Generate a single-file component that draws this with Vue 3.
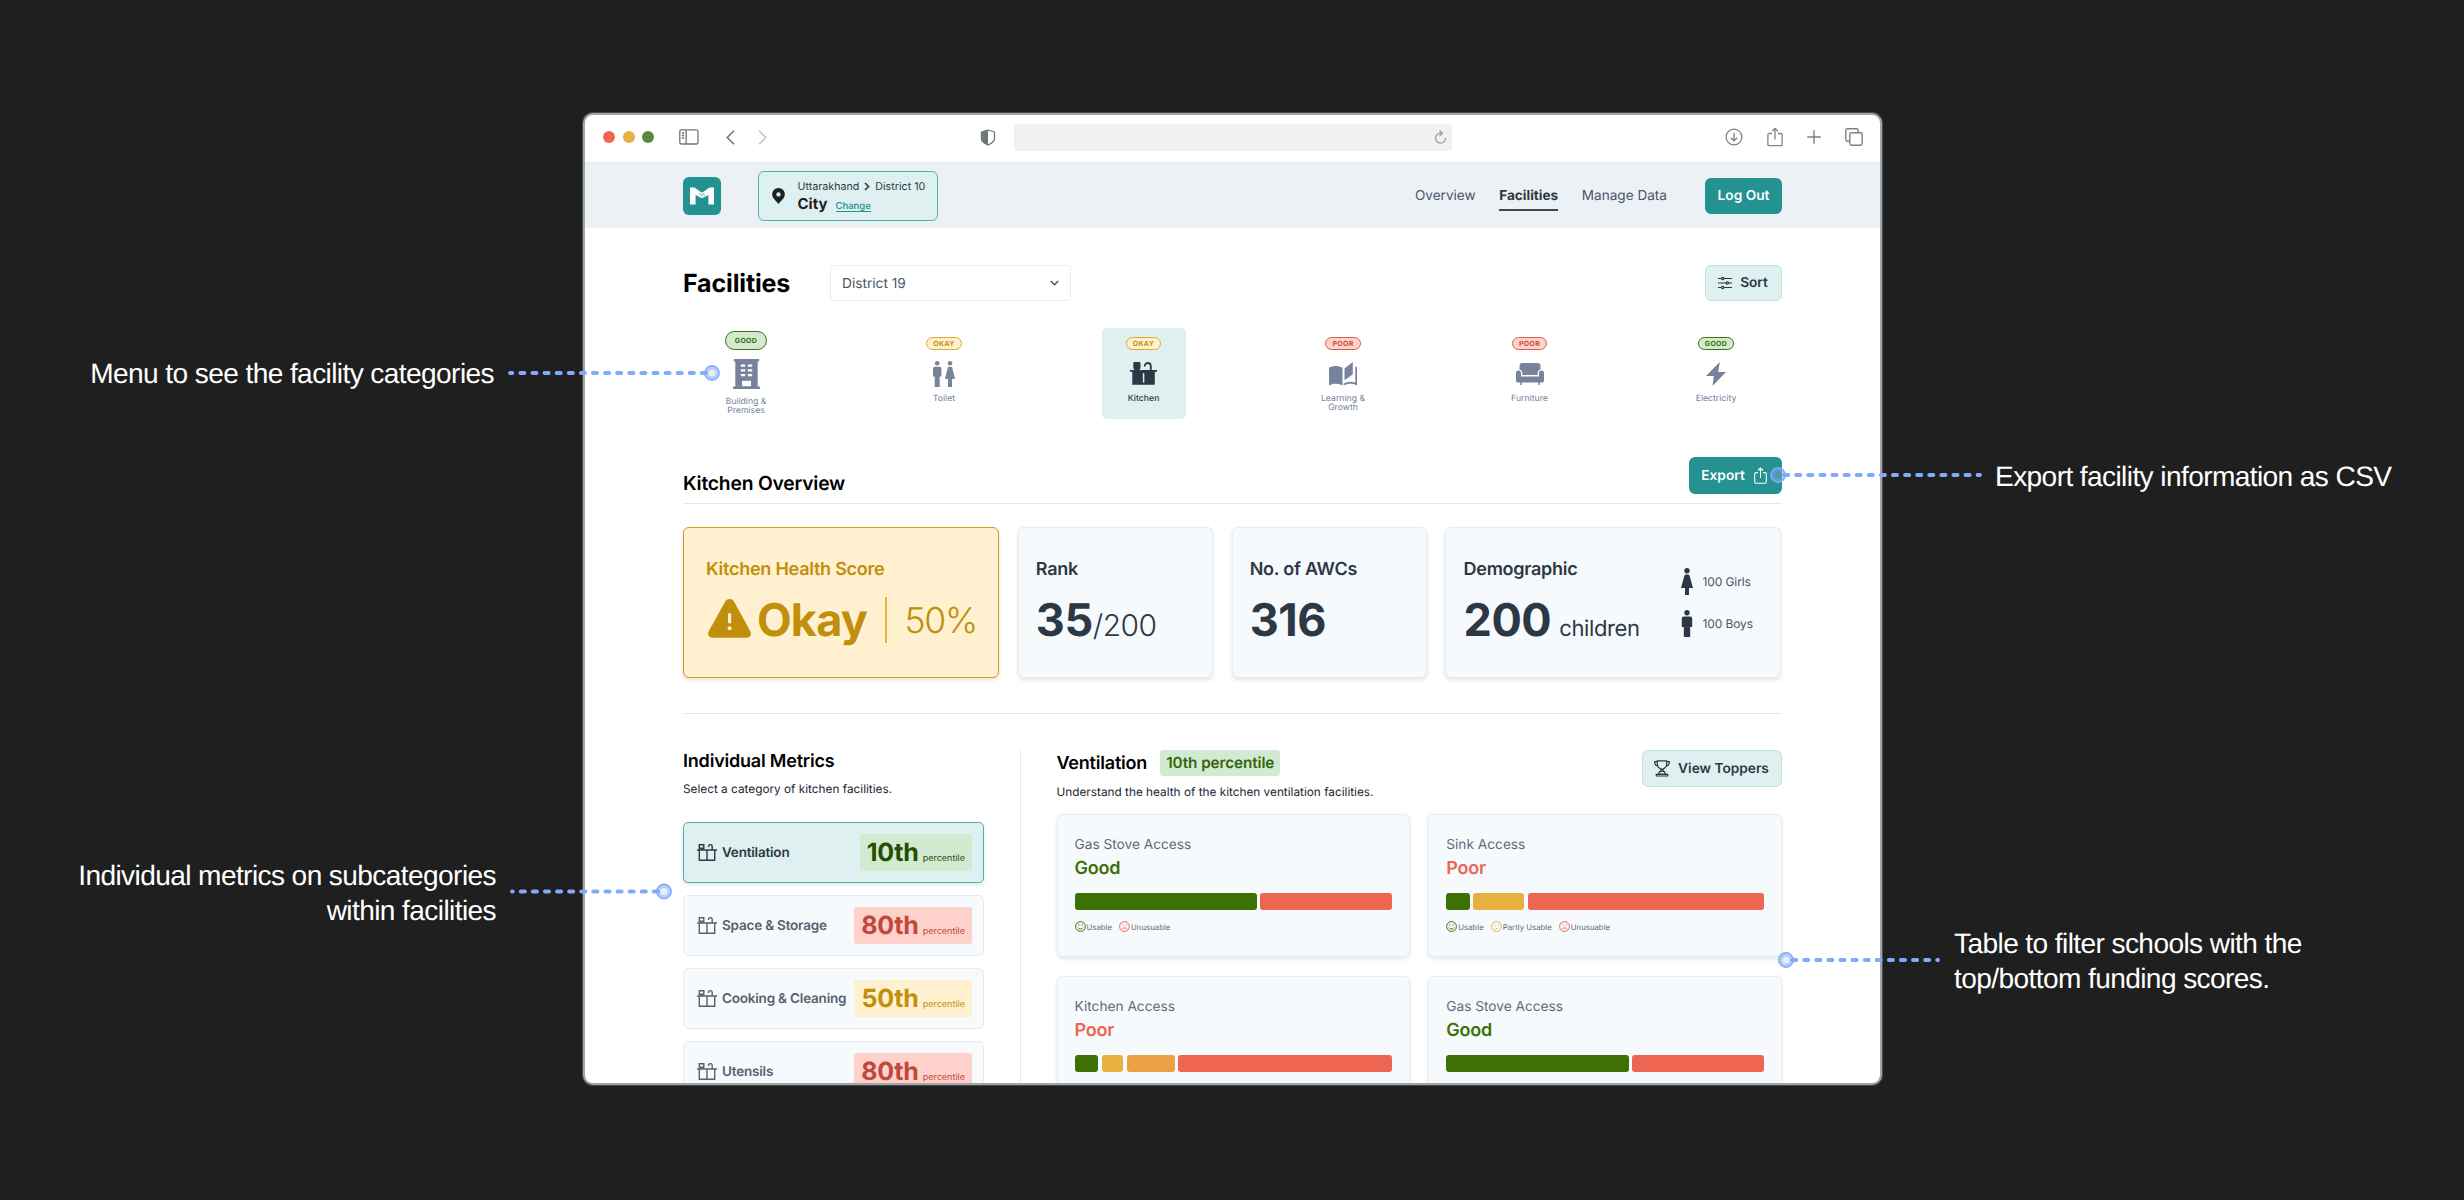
<script setup>
import { ref } from 'vue'

const activeCategory = ref('Kitchen')
const activeMetric = ref('Ventilation')

const navs = ['Overview', 'Facilities', 'Manage Data']

const categories = [
  { name: 'Building & Premises', status: 'good', icon: 'building', large: true },
  { name: 'Toilet', status: 'okay', icon: 'toilet' },
  { name: 'Kitchen', status: 'okay', icon: 'kitchen' },
  { name: 'Learning & Growth', status: 'poor', icon: 'book' },
  { name: 'Furniture', status: 'poor', icon: 'chair' },
  { name: 'Electricity', status: 'good', icon: 'bolt' },
]

const metrics = [
  { name: 'Ventilation', score: '10th', status: 'good' },
  { name: 'Space & Storage', score: '80th', status: 'poor' },
  { name: 'Cooking & Cleaning', score: '50th', status: 'okay' },
  { name: 'Utensils', score: '80th', status: 'poor' },
]

const full = [['good', 'Usable'], ['okay', 'Partly Usable'], ['poor', 'Unusuable']]
const short = [['good', 'Usable'], ['poor', 'Unusuable']]

// bars: [color, share]
const cards = [
  { name: 'Gas Stove Access', status: 'good', bars: [['good', 182.6], ['poor', 131.5]], legend: short },
  { name: 'Sink Access', status: 'poor', bars: [['good', 24], ['okay', 51], ['poor', 236.5]], legend: full },
  { name: 'Kitchen Access', status: 'poor', bars: [['good', 24], ['okay', 21.5], ['mid', 48], ['poor', 214]], legend: full },
  { name: 'Gas Stove Access', status: 'good', bars: [['good', 182.6], ['poor', 131.5]], legend: short },
]

const labels = { good: 'Good', okay: 'Okay', poor: 'Poor' }

// callouts around the window: dot + dashed line + text
const pins = [
  { x: 712, y: 373, end: 508 },
  { x: 664, y: 891.5, end: 510 },
  { x: 1778, y: 475, end: 1982 },
  { x: 1786, y: 960, end: 1940 },
]
</script>

<template>
  <div class="stage">
    <div class="window">
      <div class="toolbar">
        <div class="lights"><i class="red"></i><i class="yellow"></i><i class="green"></i></div>
        <svg class="tb-side" width="20" height="16" viewBox="0 0 20 16" fill="none" stroke="#6f7877" stroke-width="1.3">
          <rect x=".8" y=".8" width="18.2" height="14.2" rx="1.6" />
          <path d="M7.2 1v14M2.8 4h2.4M2.8 6.5h2.4M2.8 9h2.4" />
        </svg>
        <svg class="tb-back" width="9" height="15" viewBox="0 0 9 15" fill="none" stroke="#6f7877" stroke-width="1.5"><path d="M8 .8 1.2 7.5 8 14.2" /></svg>
        <svg class="tb-fwd" width="9" height="15" viewBox="0 0 9 15" fill="none" stroke="#bdc1c1" stroke-width="1.5"><path d="M1 .8 7.8 7.5 1 14.2" /></svg>
        <svg class="tb-shield" width="16" height="17" viewBox="0 0 16 17">
          <path d="M8 1 14.5 3v7c0 3-3.5 4.600-6.500 6C5 14.600 1.500 13 1.500 10V3z" fill="none" stroke="#6f7877" stroke-width="1.3" stroke-linejoin="round" />
          <path d="M8 1v15C5 14.600 1.500 13 1.500 10V3z" fill="#6f7877" />
        </svg>
        <div class="url">
          <svg width="13" height="14" viewBox="0 0 13 14" fill="none" stroke="#999d9d" stroke-width="1.3"><path d="M7.500 3.200H6.500a5 5 0 1 0 5 4.800M5.500.5l3 2.700-3 2.700" /></svg>
        </div>
        <div class="tools">
          <svg width="18" height="18" viewBox="0 0 18 18" fill="none" stroke="#7b8383" stroke-width="1.3"><circle cx="9" cy="9" r="7.900" /><path d="M9 4.800v8M5.900 9.800 9 12.900l3.100-3.100" /></svg>
          <svg width="16" height="20" viewBox="0 0 16 20" fill="none" stroke="#7b8383" stroke-width="1.300"><path d="M5 6.500H2.200A1.300 1.300 0 0 0 .9 7.800v9.600a1.300 1.300 0 0 0 1.300 1.300h11.600a1.300 1.300 0 0 0 1.300-1.300V7.800a1.300 1.300 0 0 0-1.300-1.300H11M8 12.500V1.500M5 4.300l3-3 3 3" /></svg>
          <svg width="14" height="14" viewBox="0 0 14 14" stroke="#7b8383" stroke-width="1.400"><path d="M7 .3v13.400M.3 7h13.400" /></svg>
          <svg width="18" height="18" viewBox="0 0 18 18" fill="none" stroke="#7b8383" stroke-width="1.400"><rect x="4.800" y="4.800" width="12.400" height="12.400" rx="1.600" /><path d="M4.800 13.200H2.400A1.600 1.600 0 0 1 .8 11.600V2.400A1.600 1.600 0 0 1 2.400.8h9.200a1.600 1.600 0 0 1 1.600 1.600v2.400" /></svg>
        </div>
      </div>

      <header class="header">
        <div class="logo">
          <svg width="26" height="20" viewBox="0 0 26 20">
            <path d="M1 18.500V1.500h4.500L11 5.600c1.400 1 2.600 1 4 0l5.500-4.100H25v17h-5.600V9l-4.200 2.300c-1.600.8-2.900.8-4.400 0L6.600 9v9.500z" fill="#fff" />
            <path d="M10.500 7.500 14 10.500M12.800 6.600l3.300 3" stroke="#239291" stroke-width=".8" />
          </svg>
        </div>
        <div class="location">
          <svg width="13" height="16" viewBox="0 0 13 16"><path fill-rule="evenodd" fill="#1d2024" d="M6.500 0a6.300 6.300 0 0 0-6.300 6.300C.2 10.300 4 12.600 6.500 16c2.500-3.400 6.300-5.700 6.300-9.700A6.300 6.300 0 0 0 6.500 0zm0 4.200a2.200 2.200 0 1 1 0 4.400 2.200 2.200 0 0 1 0-4.400z" /></svg>
          <div>
            <div class="crumbs">
              <span>Uttarakhand</span>
              <svg width="6" height="9" viewBox="0 0 6 9" fill="none" stroke="#2d3845" stroke-width="1.600"><path d="M1 1l3.600 3.500L1 8" /></svg>
              <span>District 10</span>
            </div>
            <div class="city"><b>City</b><a>Change</a></div>
          </div>
        </div>
        <nav>
          <a v-for="n in navs" :key="n" :class="{ active: n === 'Facilities' }">{{ n }}</a>
        </nav>
        <button class="btn solid logout">Log Out</button>
      </header>

      <main>
        <div class="title-row">
          <h1>Facilities</h1>
          <div class="select">
            <span>District 19</span>
            <svg width="9" height="6" viewBox="0 0 9 6" fill="none" stroke="#4a5568" stroke-width="1.500"><path d="M.8 1l3.700 3.700L8.200 1" /></svg>
          </div>
          <button class="btn light sort">
            <svg width="14" height="14" viewBox="0 0 14 14" fill="#def0ef" stroke="#2d3845" stroke-width="1.200">
              <path d="M0 2.500h14M0 7h14M0 11.500h14" /><circle cx="4.700" cy="2.500" r="1.200" /><circle cx="9.300" cy="7" r="1.200" /><circle cx="4.700" cy="11.500" r="1.200" />
            </svg>
            Sort
          </button>
        </div>

        <div class="categories">
          <div
            v-for="c in categories"
            :key="c.name"
            class="category"
            :class="{ active: c.name === activeCategory, large: c.large }"
            @click="activeCategory = c.name"
          >
            <span class="pill" :class="c.status">{{ labels[c.status] }}</span>
            <div class="cat-icon">
              <svg v-if="c.icon === 'building'" width="27" height="30" viewBox="0 0 27 30" fill="currentColor">
                <path fill-rule="evenodd" d="M.8 0h25.400v2.400h-1.500V27.600H27V30H0v-2.400h2.300V2.400H.8zM7.800 5.500v2.200h4.400V5.500zm7 0v2.200h4.400V5.500zm-7 4.800v2.200h4.400v-2.200zm7 0v2.200h4.400v-2.200zm-7 4.800v2.200h4.400v-2.200zm7 0v2.200h4.400v-2.200zM9 21.700v5.600h9v-5.600z" />
              </svg>
              <svg v-else-if="c.icon === 'toilet'" width="22" height="26" viewBox="0 0 22 26" fill="currentColor">
                <circle cx="4.200" cy="2.300" r="2.300" /><path d="M2 5.800h4.400a2 2 0 0 1 2 2v7.600H6.700V26h-5V15.400H0V7.800a2 2 0 0 1 2-2z" />
                <circle cx="17" cy="2.300" r="2.300" /><path d="M15.800 5.800h2.400l1 .8L22 18h-3v8h-4v-8h-3l2.800-11.400z" />
              </svg>
              <svg v-else-if="c.icon === 'kitchen'" width="27" height="23" viewBox="0 0 27 23" fill="currentColor">
                <path d="M4.500 0h4.800a1.200 1.200 0 0 1 1.200 1.200v5L9.300 8H27v1.800h-2.200v13H2.300v-13H0V8h4.500L3.300 6.200v-5A1.200 1.200 0 0 1 4.500 0z" />
                <path d="M14.800 4.600V4a3 3 0 0 1 6 0v4.500" fill="none" stroke="currentColor" stroke-width="1.800" />
                <path d="M13.600 11.200v9.300" stroke="#def0ef" stroke-width="1.500" />
              </svg>
              <svg v-else-if="c.icon === 'book'" width="28" height="24" viewBox="0 0 28 24" fill="currentColor">
                <path d="M0 5.600C4 3.400 9.500 3.400 13.500 5.600V23.400C9.500 21.200 4 21.200 0 23.400z" />
                <path d="M23.800 0v12.200l-8.300 6V6.600z" />
                <path d="M26.300 4.300 28 5.200v18.200c-4-2.200-9-2.200-13.300 0v-1.800c4-2 8-2.300 11.600-.9z" />
              </svg>
              <svg v-else-if="c.icon === 'chair'" width="28" height="22" viewBox="0 0 28 22" fill="currentColor">
                <path d="M3.500 6.500V3a3 3 0 0 1 3-3h15a3 3 0 0 1 3 3v3.500a3.600 3.600 0 0 0-2.800 3.600v1.800H6.300v-1.800a3.600 3.600 0 0 0-2.800-3.600z" />
                <path d="M2.500 7.600A2.500 2.500 0 0 1 5 10.100v3.300h18v-3.300a2.500 2.500 0 0 1 5 0v7.400a2 2 0 0 1-2 2h-2.200V22h-1.500v-2.500H5.700V22H4.200v-2.500H2a2 2 0 0 1-2-2v-7.400a2.500 2.500 0 0 1 2.500-2.500z" />
              </svg>
              <svg v-else width="20" height="24" viewBox="0 0 20 24" fill="currentColor"><path d="M13.800 0 0 14h7.800L6.500 24 20 10h-7.800z" /></svg>
            </div>
            <span class="cat-name">{{ c.name }}</span>
          </div>
        </div>

        <div class="section-head">
          <h2>Kitchen Overview</h2>
          <button class="btn solid export">
            Export
            <svg width="13" height="17" viewBox="0 0 13 17" fill="none" stroke="#fff" stroke-width="1.100"><path d="M4 5.600H2.100A1.400 1.400 0 0 0 .7 7v7.800a1.400 1.400 0 0 0 1.400 1.400h8.800a1.400 1.400 0 0 0 1.400-1.400V7a1.400 1.400 0 0 0-1.400-1.400H9M6.500 11V1M4 3.500 6.500 1 9 3.500" /></svg>
          </button>
        </div>

        <div class="stats">
          <div class="stat score">
            <h3>Kitchen Health Score</h3>
            <div class="value">
              <svg width="43" height="39" viewBox="0 0 43 39">
                <path d="M16.800 3.200c2.200-4.200 7.400-4.200 9.600 0L42.200 32c1.800 3.500.2 6.700-3.700 6.700h-34C.6 38.700-1 35.500.9 32z" fill="#c18f0c" />
                <path d="M21.600 15.500v7.500" stroke="#fff0cf" stroke-width="3.200" stroke-linecap="round" /><circle cx="21.600" cy="29.300" r="2" fill="#fff0cf" />
              </svg>
              <b>Okay</b><i class="divider"></i><span class="pct">50%</span>
            </div>
          </div>
          <div class="stat small">
            <h3>Rank</h3>
            <div class="value base"><b>35</b><span class="of">/200</span></div>
          </div>
          <div class="stat small">
            <h3>No. of AWCs</h3>
            <div class="value base"><b>316</b></div>
          </div>
          <div class="stat demo">
            <div>
              <h3>Demographic</h3>
              <div class="value base"><b>200</b><span class="kids">children</span></div>
            </div>
            <div class="people">
              <div>
                <svg width="12" height="27" viewBox="0 0 12 27" fill="#2d3845"><circle cx="6" cy="2.700" r="2.700" /><path d="M4.600 6.500h2.800l1.200 1L12 20H8v7H4v-7H0L3.400 7.500z" /></svg>
                100 Girls
              </div>
              <div>
                <svg width="12" height="27" viewBox="0 0 12 27" fill="#2d3845"><circle cx="6" cy="2.700" r="2.700" /><path d="M2.800 6.500h6.400A2 2 0 0 1 11.200 8.500v8.500H9.200v10H2.800V17H.8V8.500a2 2 0 0 1 2-2z" /></svg>
                100 Boys
              </div>
            </div>
          </div>
        </div>

        <div class="rule"></div>

        <div class="details">
          <section class="metrics">
            <h2>Individual Metrics</h2>
            <p>Select a category of kitchen facilities.</p>
            <div
              v-for="m in metrics"
              :key="m.name"
              class="metric"
              :class="{ active: m.name === activeMetric }"
              @click="activeMetric = m.name"
            >
              <svg width="20" height="17" viewBox="0 0 20 17" fill="none" stroke="currentColor" stroke-width="1.400">
                <path d="M0 6h20M2.300 6v10.200h15.400V6M10 6v10.200M2.300.7h4.500v3.500H2.300zM3.500 4.200V6M6 4.200V6M11.500 3V2.500a1.800 1.800 0 0 1 3.700 0V6" />
              </svg>
              <span class="m-name">{{ m.name }}</span>
              <span class="m-score" :class="m.status"><b>{{ m.score }}</b><small>percentile</small></span>
            </div>
          </section>

          <div class="v-rule"></div>

          <section class="panel">
            <div class="panel-head">
              <div>
                <div class="panel-title"><h2>Ventilation</h2><span>10th percentile</span></div>
                <p>Understand the health of the kitchen ventilation facilities.</p>
              </div>
              <button class="btn light toppers">
                <svg width="16" height="17" viewBox="0 0 16 17" fill="none" stroke="#2d3845" stroke-width="1.200">
                  <path d="M3.300.8h9.400v2.700c0 3-2 5.200-4.700 5.900C5.300 8.700 3.300 6.500 3.300 3.500zM3.300 1.700H.7c0 3 1.400 4.300 3.600 4.500M12.700 1.700h2.600c0 3-1.400 4.300-3.600 4.500M6.800 9v2.300h2.400V9M5.500 11.500h5l1 2.500h-7zM2.300 14.300h11.400V16H2.300z" />
                </svg>
                View Toppers
              </button>
            </div>
            <div class="cards">
              <div v-for="(c, i) in cards" :key="i" class="card">
                <div class="c-name">{{ c.name }}</div>
                <div class="c-status" :class="c.status">{{ labels[c.status] }}</div>
                <div class="bars">
                  <i v-for="(b, j) in c.bars" :key="j" :class="b[0]" :style="{ flexGrow: b[1] }"></i>
                </div>
                <div class="legend">
                  <span v-for="l in c.legend" :key="l[1]">
                    <svg :class="l[0]" width="11" height="11" viewBox="0 0 11 11" fill="none" stroke="currentColor">
                      <circle cx="5.500" cy="5.500" r="4.900" />
                      <path d="M3.800 3.400v1.200M7.200 3.400v1.200" />
                      <path v-if="l[0] === 'good'" d="M3 6.600c1 1.900 4 1.900 5 0" />
                      <path v-else-if="l[0] === 'okay'" d="M4.600 7.500h1.800" />
                      <path v-else d="M3.200 8c1-1.500 3.600-1.500 4.600 0" />
                    </svg>
                    {{ l[1] }}
                  </span>
                </div>
              </div>
            </div>
          </section>
        </div>
      </main>
    </div>

    <svg class="pins" width="2464" height="1200" viewBox="0 0 2464 1200">
      <g v-for="(p, i) in pins" :key="i">
        <line
          :x1="p.end > p.x ? p.x + 6 : p.x - 6" :y1="p.y" :x2="p.end > p.x ? p.end - 2 : p.end + 2" :y2="p.y"
          stroke="#82a9fb" stroke-width="3.800" stroke-linecap="round" stroke-dasharray="4.200 7.900"
        />
        <circle :cx="p.x" :cy="p.y" r="7.200" fill="#82a9fb" fill-opacity=".6" stroke="#82a9fb" stroke-width="1.400" />
        <circle :cx="p.x" :cy="p.y" r="3.600" :fill="i === 2 ? '#4d98ad' : '#e3f0f4'" />
      </g>
    </svg>
    <p class="note n1">Menu to see the facility categories</p>
    <p class="note n2">Individual metrics on subcategories<br>within facilities</p>
    <p class="note n3">Export facility information as CSV</p>
    <p class="note n4">Table to filter schools with the<br>top/bottom funding scores.</p>
  </div>
</template>

<style>
body {
  margin: 0;
  background: #1f1f1f;
}
</style>

<style scoped>
* {
  box-sizing: border-box;
}
h1, h2, h3, p {
  margin: 0;
}
svg {
  display: block;
  flex: none;
}
.stage {
  position: relative;
  width: 2464px;
  height: 1200px;
  padding: 113px 0 0 583px;
  background: #1f1f1f;
  overflow: hidden;
  font-family: Inter, "Liberation Sans", sans-serif;
  text-rendering: geometricPrecision;
  color: #2d3845;
}
.window {
  width: 1299px;
  height: 972px;
  border: 2px solid #a3a6a5;
  border-radius: 10px;
  background: #fff;
  overflow: hidden;
  box-shadow: 0 0 0 1px rgba(150, 155, 153, .35);
}

/* browser chrome */
.toolbar {
  display: flex;
  align-items: center;
  height: 47px;
  padding: 0 17px 3px 18px;
}
.lights {
  display: flex;
  gap: 7.5px;
}
.lights i {
  width: 12px;
  height: 12px;
  border-radius: 50%;
}
.lights .red { background: #ee6552; }
.lights .yellow { background: #e8b03e; }
.lights .green { background: #5b8a3c; }
.tb-side { margin-left: 25px; }
.tb-back { margin-left: 27px; }
.tb-fwd { margin-left: 23px; }
.tb-shield { margin-left: 213px; }
.url {
  display: flex;
  align-items: center;
  justify-content: flex-end;
  width: 438px;
  height: 27px;
  margin-left: 18px;
  padding-right: 5px;
  border-radius: 4px;
  background: #f1f1f1;
}
.tools {
  display: flex;
  align-items: center;
  justify-content: space-between;
  width: 138px;
  margin-left: auto;
}

/* header */
.header {
  display: flex;
  align-items: center;
  height: 66px;
  padding: 0 98px;
  border-top: 1px solid #e3e9ef;
  background: #ecf1f6;
}
.logo {
  display: grid;
  place-items: center;
  width: 38px;
  height: 38px;
  border-radius: 6px;
  background: #239291;
}
.location {
  display: flex;
  align-items: center;
  gap: 12.500px;
  width: 180px;
  height: 50px;
  margin-left: 37px;
  padding-left: 13px;
  border: 1px solid #4fb0b0;
  border-radius: 6px;
  background: #def0ef;
}
.crumbs {
  display: flex;
  align-items: center;
  gap: 5px;
  padding-top: 1px;
  font-size: 10.700px;
  line-height: 14px;
  white-space: nowrap;
}
.city {
  display: flex;
  align-items: baseline;
  gap: 8px;
  line-height: 19px;
}
.city b {
  font-size: 15px;
  color: #1d2024;
}
.city a {
  font-size: 9.500px;
  line-height: 9px;
  font-weight: 500;
  color: #239291;
  border-bottom: 1px solid #239291;
}
nav {
  display: flex;
  gap: 23.500px;
  margin-left: auto;
  font-size: 13.600px;
  color: #4a5568;
}
nav a {
  line-height: 26px;
  padding-top: 2px;
  border-bottom: 2px solid transparent;
}
nav a.active {
  font-weight: 700;
  color: #2d3845;
  border-color: #3c4858;
}
.btn {
  display: flex;
  align-items: center;
  justify-content: center;
  height: 36px;
  padding: 0;
  border: 0;
  border-radius: 6px;
  font: 600 13.700px Inter, sans-serif;
  text-rendering: geometricPrecision;
  white-space: nowrap;
}
.btn.solid {
  background: #239291;
  color: #fff;
}
.btn.light {
  background: #def0ef;
  border: 1px solid #bfe2e3;
  color: #2d3845;
}
.logout {
  width: 77px;
  margin-left: 38px;
}

/* body */
main {
  padding: 37px 98.500px 0 98px;
}
.title-row {
  display: flex;
  align-items: center;
  height: 36px;
}
h1 {
  width: 147px;
  padding-top: 2px;
  font-size: 25px;
  font-weight: 700;
  letter-spacing: -.15px;
  color: #000;
}
.select {
  display: flex;
  align-items: center;
  justify-content: space-between;
  width: 241px;
  height: 36px;
  padding: 0 11px;
  border: 1px solid #e6edf4;
  border-radius: 4px;
  font-size: 13.700px;
  color: #4a5568;
}
.select span {
  padding-top: 1px;
}
.sort {
  width: 77px;
  gap: 8px;
  margin-left: auto;
}

.categories {
  display: flex;
  height: 91px;
  margin-top: 27px;
  padding-left: 21px;
}
.category {
  display: flex;
  flex-direction: column;
  align-items: center;
  width: 84px;
  padding-top: 9px;
  border-radius: 5px;
  color: #76839a;
}
.category + .category { margin-left: 115.500px; }
.category:nth-child(2) { margin-left: 114px; }
.category:nth-child(n + 5) { margin-left: 102.500px; }
.category.active {
  background: #def0ef;
  color: #2d3845;
}
.pill {
  height: 13px;
  padding: 0 6px;
  border: 1px solid;
  border-radius: 10px;
  font-size: 7px;
  line-height: 11px;
  font-weight: 700;
  letter-spacing: .3px;
  text-transform: uppercase;
}
.pill.good { color: #3d7106; background: #d2e9d2; }
.pill.okay { color: #c18f0c; background: #fff0cf; border-color: #e3a62c; }
.pill.poor { color: #c44f3f; background: #fed1cb; border-color: #dc5d4c; }
.cat-icon {
  display: grid;
  place-items: center;
  height: 27px;
  margin-top: 10px;
}
.cat-name {
  width: 52px;
  margin-top: 8px;
  font-size: 8.700px;
  line-height: 9px;
  text-align: center;
}
.active .cat-name { font-weight: 500; }
.large { padding-top: 3px; }
.large .pill {
  height: 19px;
  padding: 0 9px;
  line-height: 17px;
}
.large .cat-icon {
  height: 30px;
  margin-top: 8.500px;
}
.large .cat-name { margin-top: 9.500px; }

.section-head {
  display: flex;
  justify-content: space-between;
  height: 47px;
  margin-top: 38px;
  border-bottom: 1px solid #e0e9f1;
}
.section-head h2 {
  margin-top: 14px;
  font-size: 19.300px;
  line-height: 24px;
  font-weight: 600;
  letter-spacing: -.2px;
  color: #000;
}
.export {
  width: 93px;
  height: 37px;
  gap: 9px;
  padding-right: 2px;
}
.stats {
  display: flex;
  justify-content: space-between;
  height: 151px;
  margin-top: 23px;
}
.stat {
  height: 151px;
  padding: 31px 17px 0;
  border: 1px solid #e6ecf3;
  border-radius: 6px;
  background: #f6fafd;
  box-shadow: 0 2px 4px rgba(40, 50, 70, .13);
}
.stat.small { width: 195px; }
.stat.score {
  width: 316px;
  padding-left: 22px;
  border-color: #d49c1c;
  background: #fff0cf;
  color: #c18f0c;
}
.stat h3 {
  font-size: 18px;
  line-height: 22px;
  font-weight: 600;
  letter-spacing: -.25px;
}
.value {
  display: flex;
  align-items: center;
  height: 46px;
  margin-top: 16px;
  white-space: nowrap;
}
.value.base { align-items: baseline; }
.value b {
  font-size: 45px;
  line-height: 46px;
  font-weight: 700;
  letter-spacing: -.4px;
}
.score svg {
  margin: -4px 6px 0 2px;
}
.score b {
  letter-spacing: -.8px;
}
.divider {
  flex: none;
  width: 2px;
  height: 46px;
  margin: 0 18px 0 17.500px;
  background: #e9b13e;
}
.pct {
  font-size: 35.500px;
  font-weight: 300;
  letter-spacing: -1.300px;
}
.of {
  font-size: 30px;
  font-weight: 300;
  letter-spacing: -.6px;
}
.kids {
  margin-left: 8px;
  font-size: 22px;
  letter-spacing: -.4px;
}
.stat.demo {
  display: flex;
  justify-content: space-between;
  width: 336px;
}
.people {
  display: flex;
  flex-direction: column;
  gap: 15px;
  width: 82px;
  padding-top: 9px;
  font-size: 12px;
  letter-spacing: -.1px;
  color: #4a5568;
}
.people div {
  display: flex;
  align-items: center;
  gap: 9px;
}
.rule {
  height: 1px;
  margin-top: 35px;
  background: #e0e9f1;
}

/* metrics */
.details {
  display: flex;
  height: 340px;
  margin-top: 36px;
}
.details h2 {
  padding-top: 1px;
  font-size: 18px;
  line-height: 22px;
  font-weight: 600;
  letter-spacing: -.2px;
  color: #000;
}
.details p {
  margin-top: 8px;
  font-size: 11.800px;
  line-height: 16px;
  color: #1d2733;
}
.metrics { width: 301px; }
.metrics p { margin-bottom: 25px; }
.metric {
  display: flex;
  align-items: center;
  height: 61px;
  margin-bottom: 12px;
  padding: 0 11px 0 13px;
  border: 1px solid #e3eaf1;
  border-radius: 5px;
  background: #f6fafd;
  color: #56616f;
}
.metric.active {
  border-color: #4fb0b0;
  background: #def0ef;
  color: #2d3845;
  box-shadow: 0 2px 4px rgba(40, 50, 70, .13);
}
.m-name {
  margin-left: 5px;
  font-size: 13.500px;
  font-weight: 600;
  letter-spacing: -.2px;
  white-space: nowrap;
}
.m-score {
  display: flex;
  align-items: baseline;
  gap: 4px;
  height: 37px;
  margin-left: auto;
  padding: 0 7px;
  border-radius: 3px;
  line-height: 38px;
}
.m-score b {
  font-size: 25px;
  letter-spacing: -.2px;
}
.m-score small { font-size: 9px; }
.m-score.good { color: #264f04; background: #d2e9d2; }
.m-score.okay { color: #c18f0c; background: #fff0cf; }
.m-score.poor { color: #c0493c; background: #fed1cb; }
.v-rule {
  width: 1px;
  margin: 0 36px 0 35.500px;
  background: #e3eaf1;
}

.panel { flex: 1; }
.panel-head {
  display: flex;
  justify-content: space-between;
  height: 63.500px;
}
.panel-title {
  display: flex;
  align-items: center;
  gap: 13px;
}
.panel-title span {
  padding: 0 6px;
  border-radius: 3px;
  background: #d2e9d2;
  font-size: 15.300px;
  line-height: 26px;
  font-weight: 600;
  letter-spacing: -.1px;
  color: #33650a;
}
.toppers {
  width: 140px;
  height: 37px;
  gap: 8px;
}
.cards {
  display: grid;
  grid-template-columns: 1fr 1fr;
  gap: 18.500px;
}
.card {
  height: 143.500px;
  padding: 21.500px 17px 0;
  border: 1px solid #e6ecf3;
  border-radius: 6px;
  background: #f6fafd;
  box-shadow: 0 2px 4px rgba(40, 50, 70, .12);
}
.c-name {
  font-size: 13.700px;
  line-height: 18px;
  color: #5f6b7a;
}
.c-status {
  margin-top: 4px;
  font-size: 18px;
  line-height: 22px;
  font-weight: 600;
  letter-spacing: -.2px;
}
.good { color: #3d7106; }
.okay { color: #e8b03e; }
.poor { color: #ee6552; }
.bars {
  display: flex;
  gap: 3.300px;
  height: 17px;
  margin-top: 12.500px;
}
.bars i {
  flex: 0 1 0;
  border-radius: 3px;
  background: currentColor;
}
.bars .mid {
  color: #eaa043;
}
.legend {
  display: flex;
  gap: 7px;
  margin-top: 11px;
  font-size: 7.800px;
  line-height: 12px;
  color: #5f6b7a;
}
.legend span {
  display: flex;
  align-items: center;
  gap: 1px;
}

/* callouts */
.pins {
  position: absolute;
  left: 0;
  top: 0;
}
.note {
  position: absolute;
  font-family: "Liberation Sans", sans-serif;
  font-size: 28.100px;
  line-height: 34.500px;
  letter-spacing: -.6px;
  color: #fff;
  white-space: nowrap;
}
.n1 { right: 1970px; top: 357px; }
.n2 { right: 1968px; top: 859px; text-align: right; }
.n3 { left: 1995px; top: 460px; }
.n4 { left: 1954px; top: 927px; }
</style>
